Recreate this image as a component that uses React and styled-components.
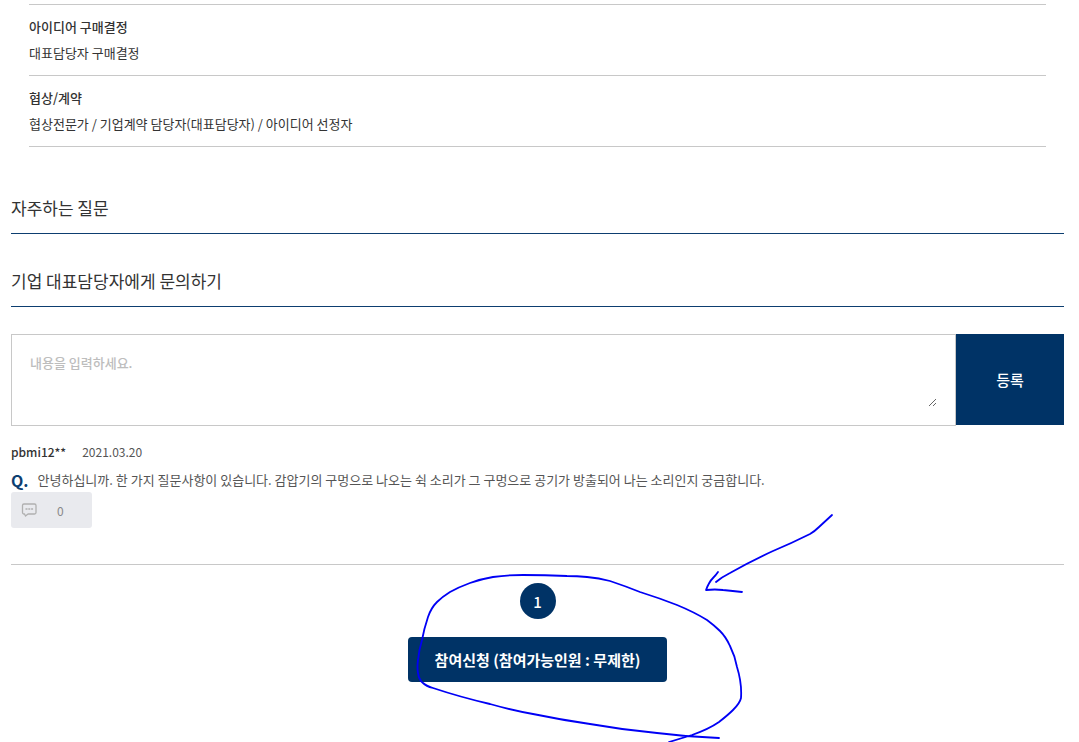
import React from "react";
import styled, { createGlobalStyle } from "styled-components";

const navy = "#003366";
const line = "#c8c8c8";

const GlobalStyle = createGlobalStyle`
  *, *::before, *::after { box-sizing: border-box; }
  body {
    margin: 0;
    background: #fff;
    color: #333;
    font: 400 13px/26px "Noto Sans CJK KR", "Noto Sans", sans-serif;
  }
  button, textarea { font-family: inherit; }
`;

const Page = styled.main`
  padding: 4px 15px 60px 11px;
  overflow: hidden;
`;

const StepList = styled.dl`
  margin: 0 18px;
  border-top: 1px solid ${line};
`;

const Step = styled.div`
  padding: 9px 0;
  border-bottom: 1px solid ${line};
`;

const StepName = styled.dt`
  font-weight: 500;
`;

const StepText = styled.dd`
  margin: 0;
`;

const SectionTitle = styled.h2`
  margin: ${(p) => (p.$first ? 48 : 34)}px 0 0;
  padding-bottom: 12px;
  border-bottom: 1px solid #0d3e70;
  font-size: 17px;
  font-weight: 400;
  line-height: 26px;
`;

const AskForm = styled.form`
  display: flex;
  align-items: flex-start;
  margin-top: 27px;
`;

const AskBox = styled.div`
  flex: 1;
  display: flex;
  padding: 16px 18px 18px;
  border: 1px solid ${line};
`;

const AskInput = styled.textarea`
  flex: 1;
  height: 56px;
  padding: 2px 0;
  border: 0;
  outline: 0;
  color: #333;
  font-size: 13px;
  font-weight: 500;
  line-height: 20px;
  &::placeholder { color: #bdbdbd; opacity: 1; }
`;

const SubmitButton = styled.button`
  width: 108px;
  height: 91px;
  padding: 0;
  border: 0;
  background: ${navy};
  color: #fff;
  font-size: 15px;
  font-weight: 500;
  cursor: pointer;
`;

const Question = styled.article`
  padding: 14px 0 36px;
  color: #555;
  line-height: 24px;
`;

const QuestionMeta = styled.div`
  display: flex;
  gap: 16px;
  margin-bottom: 4px;
  font-size: 12px;
`;

const Author = styled.span`
  color: #333;
  font-weight: 500;
`;

const QuestionBody = styled.div`
  display: flex;
  gap: 9px;
`;

const QuestionMark = styled.span`
  color: #0d3e70;
  font-size: 16px;
  font-weight: 700;
`;

const QuestionText = styled.p`
  margin: 0;
`;

const ReplyButton = styled.button`
  display: flex;
  align-items: center;
  gap: 20px;
  width: 81px;
  height: 36px;
  padding: 0 10px;
  border: 0;
  border-radius: 3px;
  background: #e9eaee;
  color: #888;
  font-size: 12px;
  cursor: pointer;
`;

const Apply = styled.section`
  position: relative;
  display: flex;
  flex-direction: column;
  align-items: center;
  gap: 18px;
  padding-top: 18px;
  border-top: 1px solid ${line};
`;

const PageButton = styled.button`
  width: 36px;
  height: 36px;
  padding: 0;
  border: 0;
  border-radius: 50%;
  background: ${navy};
  color: #fff;
  font-size: 15px;
  font-weight: 500;
  cursor: pointer;
`;

const ApplyButton = styled.button`
  height: 45px;
  padding: 0 27px;
  border: 0;
  border-radius: 4px;
  background: ${navy};
  color: #fff;
  font-size: 15px;
  font-weight: 700;
  cursor: pointer;
`;

const PenMarks = styled.svg`
  position: absolute;
  top: -55px;
  left: 50%;
  margin-left: -138px;
  pointer-events: none;
`;

const steps = [
  { name: "아이디어 구매결정", text: "대표담당자 구매결정" },
  { name: "협상/계약", text: "협상전문가 / 기업계약 담당자(대표담당자) / 아이디어 선정자" },
];

function BubbleIcon() {
  return (
    <svg width="16" height="16" viewBox="0 0 16 16" fill="none" aria-hidden="true">
      <path
        d="M3 2h10.500a1.500 1.500 0 0 1 1.500 1.500v7a1.500 1.500 0 0 1-1.500 1.500H7l-2.500 2-1-2H3a1.500 1.500 0 0 1-1.500-1.500v-7A1.500 1.500 0 0 1 3 2Z"
        stroke="#b0b0b0"
        strokeWidth="1.300"
        strokeLinejoin="round"
      />
      <path d="M4.500 6.200h2v1.600h-2zM7.300 6.200h2v1.600h-2zM10.100 6.200h2v1.600h-2z" fill="#b0b0b0" />
    </svg>
  );
}

export default function App() {
  return (
    <>
      <GlobalStyle />
      <Page>
        <StepList>
          {steps.map((s) => (
            <Step key={s.name}>
              <StepName>{s.name}</StepName>
              <StepText>{s.text}</StepText>
            </Step>
          ))}
        </StepList>

        <SectionTitle $first>자주하는 질문</SectionTitle>
        <SectionTitle id="ask-title">기업 대표담당자에게 문의하기</SectionTitle>

        <AskForm onSubmit={(e) => e.preventDefault()}>
          <AskBox>
            <AskInput aria-labelledby="ask-title" placeholder="내용을 입력하세요." />
          </AskBox>
          <SubmitButton type="submit">등록</SubmitButton>
        </AskForm>

        <Question>
          <QuestionMeta>
            <Author>pbmi12**</Author>
            <time dateTime="2021-03-20">2021.03.20</time>
          </QuestionMeta>
          <QuestionBody>
            <QuestionMark>Q.</QuestionMark>
            <QuestionText>
              안녕하십니까. 한 가지 질문사항이 있습니다. 감압기의 구멍으로 나오는 쉭 소리가 그 구멍으로 공기가 방출되어 나는 소리인지 궁금합니다.
            </QuestionText>
          </QuestionBody>
          <ReplyButton type="button">
            <BubbleIcon />
            <span>0</span>
          </ReplyButton>
        </Question>

        <Apply>
          <PageButton type="button">1</PageButton>
          <ApplyButton type="button">참여신청 (참여가능인원 : 무제한)</ApplyButton>
          <PenMarks
            width="450"
            height="232"
            viewBox="400 510 450 232"
            fill="none"
            stroke="#0000f5"
            strokeWidth="1.800"
            strokeLinecap="round"
            strokeLinejoin="round"
            aria-hidden="true"
          >
            <path d="M669 742L692 735Q709 729 719 722Q728 715 733 710Q740 703 741 698Q742 683 737 667Q735 656 730 646Q726 637 720 631Q715 626 707 620Q694 612 677 605Q659 598 640 592Q625 586 610 581Q599 578 587 577Q577 576 567 576Q545 575 523 575Q507 575 493 577Q481 579 470 583Q459 587 450 592Q442 597 437 602Q431 608 428 617Q424 629 422 640Q419 650 418 660Q417 667 418 673Q419 680 423 683Q426 686 433 688Q460 697 490 704Q511 710 533 714Q562 720 590 724Q624 730 657 733Q688 737 719 738" />
            <path d="M832 515L819 527Q815 531 810 534Q792 543 773 551Q751 561 730 573Q722 577 716 582" />
            <path d="M718 572Q716 575 713 578Q709 582 706 590Q715 589 723 590Q733 591 742 592" />
          </PenMarks>
        </Apply>
      </Page>
    </>
  );
}
